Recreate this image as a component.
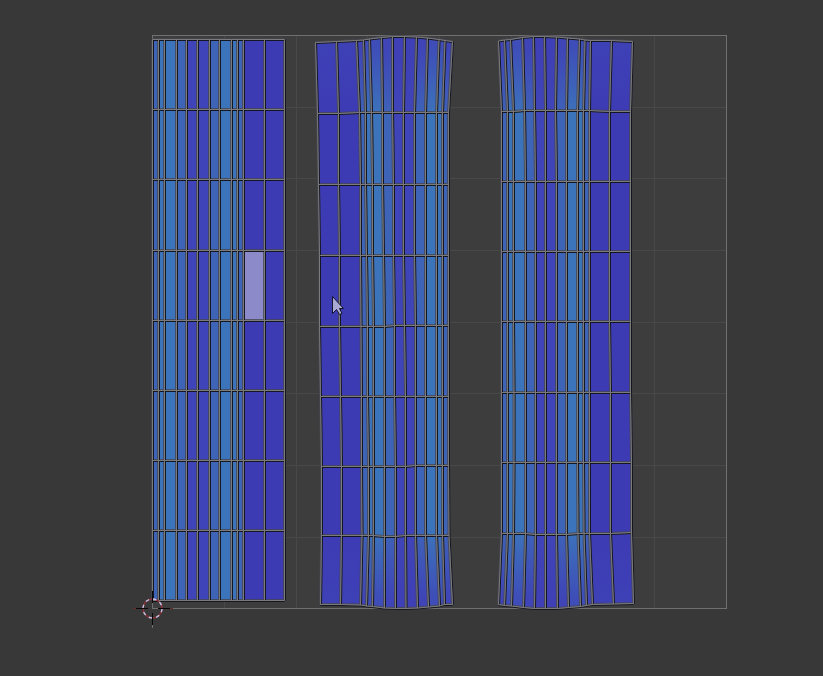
const DEEP = "#3d3bb4";
const INDIGO = "#3f45b8";
const MID = "#3e64b8";
const LIGHT = "#3c74bb";

const STRIP = [MID, LIGHT, LIGHT, MID, INDIGO, INDIGO, MID, LIGHT, LIGHT, MID, DEEP, DEEP];
const MIRRORED = [DEEP, DEEP, MID, LIGHT, LIGHT, MID, INDIGO, INDIGO, MID, LIGHT, LIGHT, MID];

const gradientFor = { [DEEP]: "deep", [INDIGO]: "indigo", [MID]: "mid", [LIGHT]: "light" };
const gradientFar = { [DEEP]: "#3e40b6", [INDIGO]: "#3f3fb6", [MID]: "#3f44b7", [LIGHT]: "#3e4db8" };

function zip(xs, ys) {
  return xs.map((x, i) => [x, Array.isArray(ys) ? ys[i] : ys]);
}

const stripX = [152.5, 158.5, 164.5, 176.5, 186.5, 197.5, 209.5, 219.5, 231.5, 237.5, 243.5, 264.5, 284.5];
const stripRows = [39.5, 109.5, 179.5, 250.5, 320.5, 390.5, 460.5, 530.5, 600.5].map((y) => zip(stripX, y));

const middleRows = [
  zip([315.5, 336.5, 356.5, 363.5, 369.5, 381.5, 392.5, 404.5, 416.5, 427.5, 439, 445, 452.5],
    [42.5, 41.5, 40.5, 40, 39, 37.5, 36.5, 36.5, 37, 38, 39.5, 40.5, 41.5]),
  zip([317.5, 338.5, 359.5, 365.5, 371.5, 382.5, 392.5, 403.5, 414.5, 425.5, 436.5, 442.5, 448.5],
    [113.5, 113.5, 112.5, 112.5, 112.5, 112.5, 112.5, 112.5, 112.5, 112.5, 112.5, 112.5, 112.5]),
  zip([318.5, 338.5, 360.5, 365.5, 372.5, 382.5, 393.5, 403.5, 414.5, 425.5, 436.5, 442.5, 448.5], 184.5),
  zip([319.5, 339.5, 360.5, 366.5, 372.5, 383.5, 393.5, 403.5, 414.5, 425.5, 436.5, 442.5, 448.5], 255.5),
  zip([319.5, 339.5, 361, 367.5, 373.5, 384.5, 394.5, 404.5, 415.5, 425.5, 436.5, 442.5, 448.5],
    [326.5, 326.5, 326.5, 326.5, 326.5, 326.5, 325.5, 325.5, 325.5, 325.5, 325.5, 325.5, 325.5]),
  zip([320.5, 340.5, 361.5, 367.5, 373.5, 384.5, 394.5, 405.5, 415.5, 425.5, 436.5, 442.5, 448.5], 396.5),
  zip([321.5, 341.5, 361.5, 368.5, 373.5, 384.5, 395.5, 405.5, 415.5, 425.5, 436.5, 442.5, 448.5],
    [466.5, 466.5, 466.5, 466.5, 466.5, 466.5, 466.5, 466.5, 465.5, 465.5, 465.5, 465.5, 465.5]),
  zip([321.5, 341.5, 362, 368.5, 373.5, 384.5, 395.5, 405.5, 415.5, 425.5, 436.5, 442.5, 449],
    [535.5, 535.5, 535.5, 535.5, 535.5, 536.5, 536.5, 535.5, 535.5, 535.5, 535.5, 535.5, 535.5]),
  zip([320.5, 340.5, 360.5, 366.5, 372.5, 384.5, 395.5, 406, 417.5, 428.5, 439.5, 444.5, 452.5],
    [604.5, 604.5, 605, 606, 606.5, 608, 608.5, 608.5, 608, 607, 606, 604.5, 604.5]),
];

const rightRows = [
  zip([498.5, 504.5, 510.5, 522.5, 533.5, 544.5, 556.5, 567.5, 579.5, 585, 590.5, 611.5, 632.5],
    [41, 40, 39.5, 37.5, 36.5, 36.5, 37, 38, 39, 40, 40.5, 40.5, 41.5]),
  zip([501.5, 507.5, 513.5, 524.5, 534.5, 545.5, 555.5, 566.5, 577.5, 583.5, 589.5, 609.5, 630.5],
    [111.5, 111.5, 111.5, 110.5, 110.5, 110.5, 110.5, 110.5, 110.5, 110.5, 110.5, 111.5, 111.5]),
  zip([501.5, 507.5, 513.5, 525.5, 535.5, 545.5, 556.5, 566.5, 577.5, 583.5, 589.5, 609.5, 630.5], 181.5),
  zip([501.5, 507.5, 513.5, 525.5, 535.5, 545.5, 556.5, 566.5, 577.5, 583.5, 589.5, 609.5, 630.5], 251.5),
  zip([501.5, 507.5, 513.5, 525.5, 535.5, 545.5, 556.5, 566.5, 577.5, 583.5, 589.5, 609.5, 630.5], 321.5),
  zip([501.5, 507.5, 514, 525.5, 535.5, 545.5, 556.5, 566.5, 577.5, 583.5, 589.5, 610.5, 630.5], 392.5),
  zip([501.5, 507.5, 514, 525.5, 535.5, 545.5, 556.5, 566.5, 577.5, 583.5, 589.5, 610.5, 631.5], 462.5),
  zip([501.5, 507.5, 513.5, 525.5, 535.5, 545.5, 556.5, 566.5, 578, 584, 589.5, 610.5, 631.5],
    [533.5, 533.5, 533.5, 533.5, 534.5, 534.5, 534.5, 534.5, 533.5, 533.5, 533.5, 533.5, 532.5]),
  zip([498.5, 504.5, 511.5, 523.5, 534.5, 545.5, 557.5, 568.5, 580.5, 586.5, 592.5, 613.5, 633.5],
    [604.5, 605.5, 606, 607.5, 608.5, 608.5, 608.5, 607.5, 606.5, 605.5, 604.5, 604, 603.5]),
];

const line = (points) => "M" + points.map(([x, y]) => `${x} ${y}`).join("L");

function Island({ rows, colors, bent = false, selected }) {
  const faces = [];
  for (let r = 0; r < rows.length - 1; r++) {
    for (let c = 0; c < colors.length; c++) {
      let fill = colors[c];
      if (bent && r === 0) fill = `url(#${gradientFor[fill]}-top)`;
      else if (bent && r === rows.length - 2) fill = `url(#${gradientFor[fill]}-bottom)`;
      if (selected && selected[0] === r && selected[1] === c) fill = "#8d8ac9";
      const quad = [rows[r][c], rows[r][c + 1], rows[r + 1][c + 1], rows[r + 1][c]];
      faces.push(<path key={`${r}-${c}`} d={line(quad) + "Z"} fill={fill} />);
    }
  }
  const columns = rows[0].map((_, c) => line(rows.map((row) => row[c]))).join("");
  const across = rows.map(line).join("");
  return (
    <g fill="none">
      {faces}
      <path d={columns + across} stroke="#464650" strokeOpacity="0.8" strokeWidth="3" />
      <path d={columns} transform="translate(1 0)" stroke="#0c0e18" strokeOpacity="0.85" />
      <path d={across} transform="translate(0 1)" stroke="#0c0e18" strokeOpacity="0.85" />
      <path d={columns + across} stroke="#7b7b7b" />
    </g>
  );
}

function FaceGradients() {
  return (
    <defs>
      {Object.entries(gradientFor).map(([color, name]) => [
        <linearGradient key={name + "t"} id={name + "-top"} gradientUnits="userSpaceOnUse" x1="0" y1="38" x2="0" y2="118">
          <stop offset="0.1" stopColor={gradientFar[color]} />
          <stop offset="1" stopColor={color} />
        </linearGradient>,
        <linearGradient key={name + "b"} id={name + "-bottom"} gradientUnits="userSpaceOnUse" x1="0" y1="529" x2="0" y2="607">
          <stop offset="0" stopColor={color} />
          <stop offset="0.9" stopColor={gradientFar[color]} />
        </linearGradient>,
      ])}
    </defs>
  );
}

function UvGrid() {
  const xs = [224.5, 296.5, 367.5, 439.5, 511.5, 582.5, 654.5];
  const ys = [107.5, 178.5, 250.5, 322.5, 393.5, 465.5, 537.5];
  return (
    <g fill="none">
      <rect x="152.5" y="35.5" width="574" height="573" fill="#3d3d3d" />
      <path d={xs.map((x) => `M${x} 36V608`).join("") + ys.map((y) => `M152 ${y}H726`).join("")} stroke="#484848" />
      <rect x="152.5" y="35.5" width="574" height="573" stroke="#707070" />
    </g>
  );
}

function Cursor2D() {
  return (
    <g fill="none">
      <circle cx="152.5" cy="608.5" r="9.5" stroke="#8d3038" strokeWidth="1.4" />
      <circle cx="152.5" cy="608.5" r="9.5" stroke="#c5c2e6" strokeWidth="1.4" strokeDasharray="3.73 3.73" />
      <path d="M133 608.5H137M169 608.5H173" stroke="#6b2a2e" />
      <path d="M136 608.5H148M158 608.5H170M152.5 591V603M152.5 613V625" stroke="#080808" />
      <path d="M152.5 625V628M152.5 603V608.5H158" stroke="#707070" />
    </g>
  );
}

function Pointer() {
  return (
    <path
      d="M332.5 296.5V313.5L336.5 309.5L339.5 314.5L342 313.5L339.5 308.5H343.5Z"
      fill="#aaa9d4"
      stroke="#15162a"
      strokeLinejoin="round"
    />
  );
}

export default function App() {
  return (
    <main className="min-h-screen bg-[#383838]">
      <svg viewBox="0 0 823 676" className="block h-auto w-full" role="img" aria-label="UV editor">
        <FaceGradients />
        <UvGrid />
        <Island rows={stripRows} colors={STRIP} selected={[3, 10]} />
        <Island rows={middleRows} colors={MIRRORED} bent />
        <Island rows={rightRows} colors={STRIP} bent />
        <Cursor2D />
        <Pointer />
      </svg>
    </main>
  );
}
